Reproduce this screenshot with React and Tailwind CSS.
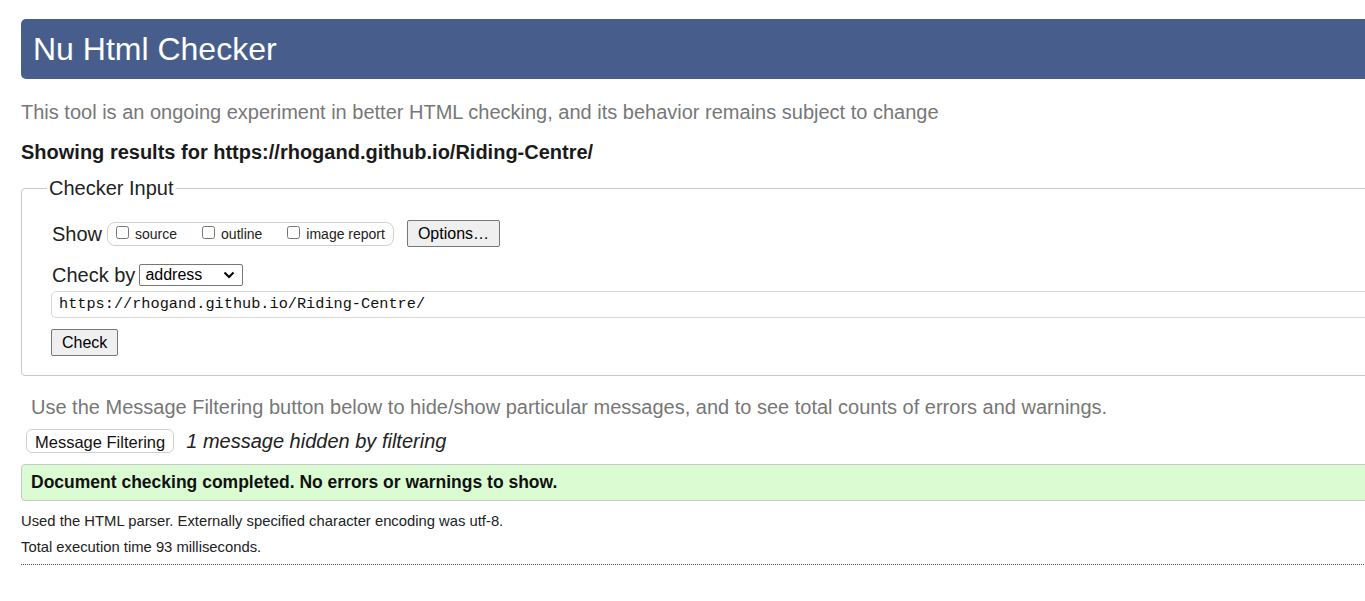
import React from 'react';

const sans = "font-['Liberation_Sans',Arial,sans-serif]";

const Checkbox = ({ label }) => (
  <label className="flex items-center">
    <input type="checkbox" className="w-[13px] h-[13px] m-0 mr-[6px] -mt-[3px]" />
    <span className="text-[14px] text-[#222] mt-[2px]">{label}</span>
  </label>
);

export default function App() {
  return (
    <div className={`w-full overflow-hidden bg-white ${sans} text-[#222]`}>
      <div className="w-[1420px] pl-[21px] pb-[37px]">
        {/* Header */}
        <div className="mt-[19px] h-[60px] rounded-[5px] bg-[#475e8d] flex items-center pl-[12px]">
          <h1 className="text-[32px] text-white leading-none">Nu Html Checker</h1>
        </div>

        <p className="mt-[21px] text-[20px] leading-[24px] text-[#777]">
          This tool is an ongoing experiment in better HTML checking, and its behavior remains subject to change
        </p>

        <p className="mt-[16px] text-[20px] leading-[24px] font-bold text-[#1a1a1a]">
          Showing results for https://rhogand.github.io/Riding-Centre/
        </p>

        {/* Checker Input */}
        <fieldset className="mt-[12px] border border-[#c8c8c8] rounded-[4px] pl-[30px] pr-4 pb-[19px] pt-0">
          <legend className="-ml-[5px] -mb-[1px] px-[2px] text-[20px] leading-[24px] text-[#222]">Checker Input</legend>

          <div className="flex items-center mt-[21px]">
            <span className="text-[20px] leading-[24px] mr-[5px]">Show</span>
            <div className="flex items-center gap-[25px] h-[24px] border border-[#d0d0d0] rounded-[8px] pl-[8px] pr-[8px]">
              <Checkbox label="source" />
              <Checkbox label="outline" />
              <Checkbox label="image report" />
            </div>
            <button className="ml-[13px] h-[27px] px-[10px] bg-[#efefef] border border-[#767676] rounded-[2px] text-[16px] text-black">
              Options…
            </button>
          </div>

          <div className="flex items-center mt-[16px]">
            <span className="text-[20px] leading-[24px] mr-[4px]">Check by</span>
            <div className="w-[104px] h-[22px] border border-[#767676] rounded-[2px] flex items-center justify-between pl-[5px] pr-[6px]">
              <span className="text-[16px] leading-none text-black">address</span>
              <svg width="12" height="8" viewBox="0 0 12 8" className="mr-[1px]">
                <path d="M1.5 1.5 L6 6 L10.5 1.5" fill="none" stroke="#000" strokeWidth="2" />
              </svg>
            </div>
          </div>

          <div className="mt-[4px] -ml-[1px] h-[27px] border border-[#d8d8d8] rounded-[5px] flex items-center pl-[7px]">
            <span className="font-['Liberation_Mono',monospace] text-[15.25px] text-[#111]">
              https://rhogand.github.io/Riding-Centre/
            </span>
          </div>

          <button className="mt-[11px] -ml-[1px] h-[27px] px-[10px] bg-[#efefef] border border-[#767676] rounded-[2px] text-[16px] text-black">
            Check
          </button>
        </fieldset>

        {/* Filtering */}
        <p className="mt-[19px] ml-[10px] text-[20px] leading-[24px] text-[#777]">
          Use the Message Filtering button below to hide/show particular messages, and to see total counts of errors and warnings.
        </p>

        <div className="flex items-center mt-[7px] ml-[5px]">
          <button className="h-[24px] px-[8px] bg-white border border-[#cfcfcf] rounded-[6px] text-[16.5px] text-[#111]">
            Message Filtering
          </button>
          <span className="ml-[12px] text-[20px] italic text-[#222]">1 message hidden by filtering</span>
        </div>

        <div className="mt-[8px] h-[37px] bg-[#dbfcd3] border border-[#c8c8c8] rounded-[4px] flex items-center pl-[9px]">
          <span className="text-[17.5px] font-bold text-[#111]">
            Document checking completed. No errors or warnings to show.
          </span>
        </div>

        <p className="mt-[12px] text-[14.8px] leading-[16px] text-[#222]">
          Used the HTML parser. Externally specified character encoding was utf-8.
        </p>
        <p className="mt-[10px] text-[14.8px] leading-[16px] text-[#222]">
          Total execution time 93 milliseconds.
        </p>

        <div className="mt-[9px] border-t border-dotted border-[#555]" />
      </div>
    </div>
  );
}
